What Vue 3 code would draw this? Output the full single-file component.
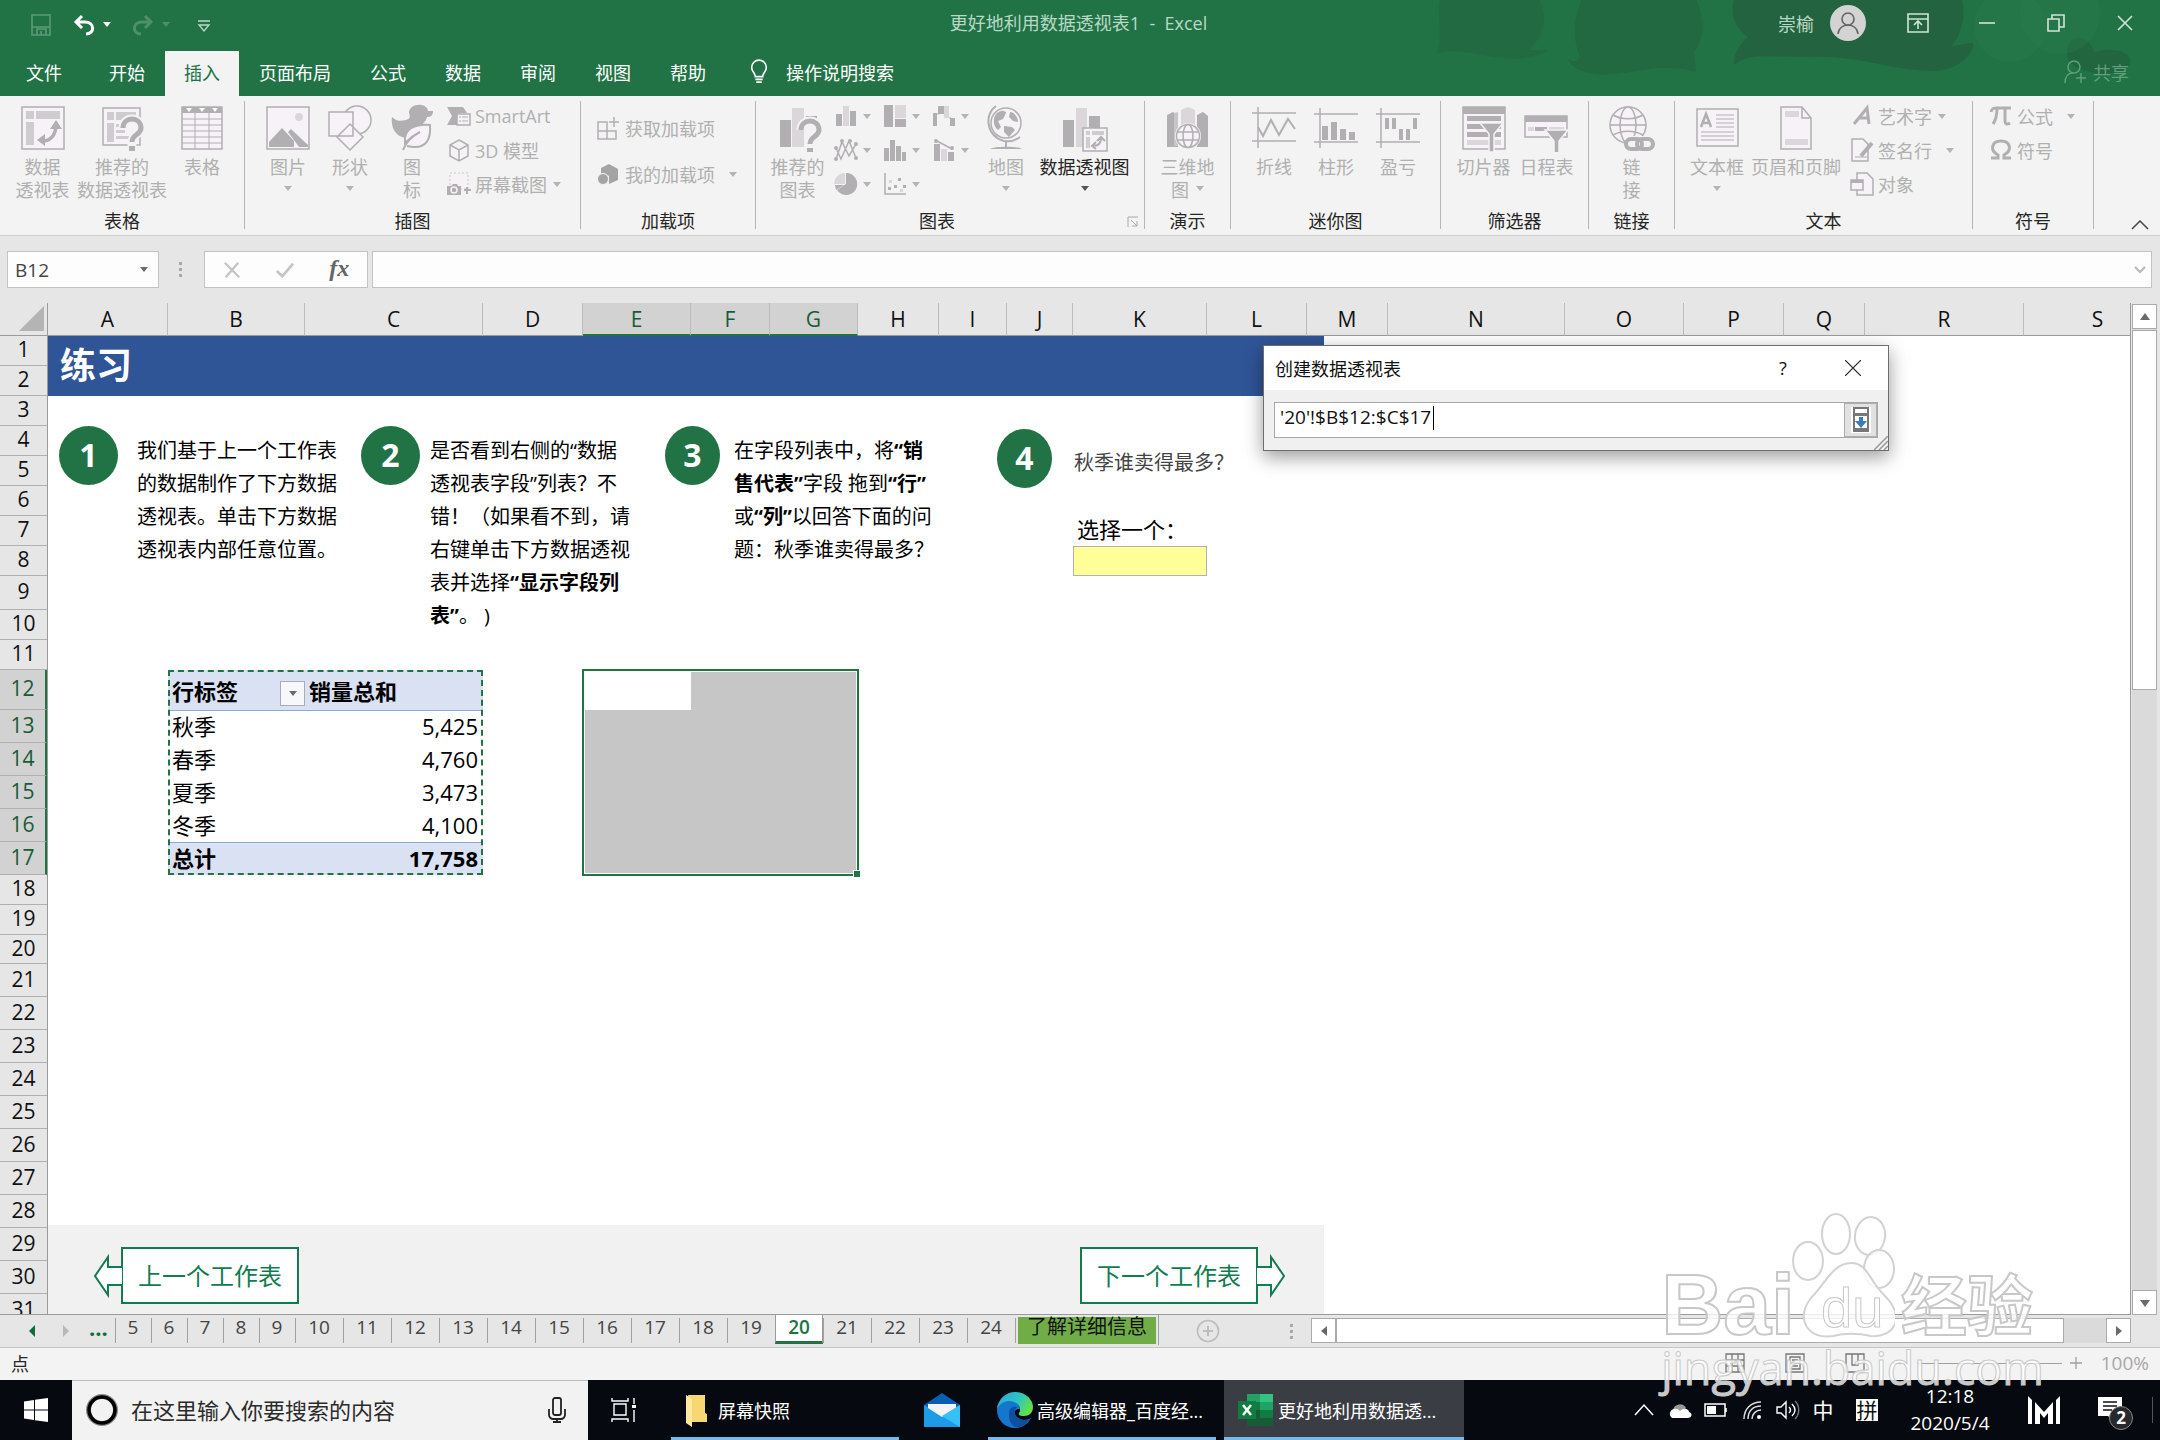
<template>
  <div class="app">
    <header class="titlebar">
      <svg class="titlebar-art" viewBox="0 0 760 96" aria-hidden="true">
        <path fill="#23663f" opacity=".6" d="M40 0h100c8 18 4 38-12 50l20 0c-14 10-40 10-62 6-24-6-40-6-50-2 8-14 0-36 4-54z"/>
        <path fill="#23643f" opacity=".75" d="M182 0h114c10 20 8 40-2 52l2 20c-40-12-70 6-102 2-14-2-24-8-26-15 6 4 10 2 12-2-8-20-6-40 2-57z"/>
        <path fill="#23633f" d="M334 0h228c4 16 0 32-10 46l20-3c6 3-8 26-36 28-50 0-70-16-130-14-36 0-58-4-72 8 0-10 4-20 14-28-14-10-18-24-14-37z"/>
        <path fill="#23633f" opacity=".8" d="M668 60c-6-30 22-26 26-8 30-8 46 8 30 18-20 8-46 2-56-10z"/>
        <circle cx="610" cy="26" r="36" fill="#2a7c4e" opacity=".35"/>
        <circle cx="660" cy="14" r="40" fill="#2a7c4e" opacity=".35"/>
      </svg>
      <div class="quick-access">
        <button class="qa-btn" aria-label="保存"><svg viewBox="0 0 24 24"><g fill="none" stroke="#5d9a78" stroke-width="1.600"><path d="M3 2h18v20H3z"/><path d="M8 22v-6h9v6M3 14h18M12 18v4"/></g></svg></button>
        <button class="qa-btn" aria-label="撤消"><svg viewBox="0 0 24 24"><path d="M4 9h9c10 0 10 12 1 12M10 3L4 9l6 6" fill="none" stroke="#fff" stroke-width="3"/></svg></button>
        <span class="caret caret--light"></span>
        <button class="qa-btn" aria-label="恢复"><svg viewBox="0 0 24 24"><path d="M20 9h-9c-10 0-10 12-1 12M14 3l6 6-6 6" fill="none" stroke="#4d9069" stroke-width="3"/></svg></button>
        <span class="caret caret--dim"></span>
        <button class="qa-btn" aria-label="自定义"><svg viewBox="0 0 24 24"><path d="M8 8h12M9 12h10l-5 6z" fill="none" stroke="#bcdac8" stroke-width="1.300"/></svg></button>
      </div>
      <div class="doc-title">更好地利用数据透视表1&nbsp; -&nbsp; Excel</div>
      <div class="window-area">
        <span class="user-name">崇榆</span>
        <span class="avatar"><svg viewBox="0 0 36 36"><g fill="none" stroke="#666" stroke-width="1.600"><circle cx="18" cy="14" r="6"/><path d="M8 29c1-12 19-12 20 0"/></g></svg></span>
        <button v-for="w in windowButtons" :key="w.label" class="win-btn" :aria-label="w.label">
          <svg viewBox="0 0 24 24" v-html="w.art"></svg>
        </button>
      </div>
    </header>

    <nav class="tabs">
      <button
        v-for="tab in tabs"
        :key="tab"
        class="tab"
        :class="{ 'tab--active': tab === '插入', 'tab--file': tab === '文件' }"
      >{{ tab }}</button>
      <button class="tell-me">
        <svg viewBox="0 0 24 28"><g fill="none" stroke="#fff" stroke-width="1.800"><path d="M8 19c0-4-4-5-4-10a8 8 0 0 1 16 0c0 5-4 6-4 10zM8 22h8M9 25h6"/></g></svg>
        操作说明搜索
      </button>
      <button class="share">
        <svg viewBox="0 0 24 24"><g fill="none" stroke="#5f9f7c" stroke-width="1.500"><circle cx="11" cy="7" r="6"/><path d="M2 23c0-6 3-10 8-10M18 13v10M13 18h10"/></g></svg>
        共享
      </button>
    </nav>

    <section class="ribbon">
      <div v-for="g in groups" :key="g.name" class="group" :class="'group--' + g.key">
        <div class="group-body">
          <button
            v-for="b in g.big"
            :key="b.icon"
            class="big-btn"
            :class="{ 'big-btn--on': b.on }"
            :style="{ width: b.w + 'px' }"
          >
            <svg viewBox="0 0 48 48" v-html="icons[b.icon]"></svg>
            <span v-for="(line, i) in b.lines" :key="i" class="big-line">
              {{ line }}<i v-if="b.inlineArrow && i === b.lines.length - 1" class="caret"></i>
            </span>
            <span v-if="b.arrow" class="big-line"><i class="caret"></i></span>
          </button>
          <div v-if="g.small" class="small-list">
            <button v-for="s in g.small" :key="s.icon" class="small-btn">
              <svg viewBox="0 0 24 24" v-html="icons[s.icon]"></svg>
              <span v-if="s.text">{{ s.text }}</span>
              <i v-if="s.arrow" class="caret" :class="{ 'caret--far': s.far }"></i>
            </button>
          </div>
          <button
            v-for="b in g.after"
            :key="b.icon"
            class="big-btn"
            :class="{ 'big-btn--on': b.on }"
            :style="{ width: b.w + 'px' }"
          >
            <svg viewBox="0 0 48 48" v-html="icons[b.icon]"></svg>
            <span class="big-line">{{ b.lines[0] }}</span>
            <span class="big-line"><i class="caret"></i></span>
          </button>
        </div>
        <div class="group-name">{{ g.name }}</div>
        <svg v-if="g.key === 'chart'" class="launcher" viewBox="0 0 12 12"><path d="M1 11V1h10M4 4l6 6M10 5v5H5" fill="none" stroke="#a8a8a8"/></svg>
      </div>
      <button class="collapse" aria-label="折叠功能区"><svg viewBox="0 0 18 10"><path d="M1 9l8-8 8 8" fill="none" stroke="#444" stroke-width="1.500"/></svg></button>
    </section>

    <section class="formula-row">
      <label class="name-box">
        <input value="B12" aria-label="名称框">
        <i class="caret caret--dark"></i>
      </label>
      <span class="dots"></span>
      <div class="formula-tools">
        <button aria-label="取消"><svg viewBox="0 0 20 20"><path d="M2 2l16 16M17 2L3 18" stroke="#c4c4c4" stroke-width="2.500" fill="none"/></svg></button>
        <button aria-label="输入"><svg viewBox="0 0 20 20"><path d="M1 11l6 6L19 3" stroke="#c4c4c4" stroke-width="3" fill="none"/></svg></button>
        <button aria-label="插入函数" class="fx">fx</button>
      </div>
      <div class="formula-box">
        <input value="" aria-label="编辑栏">
        <svg viewBox="0 0 12 12"><path d="M1 3l5 5 5-5" fill="none" stroke="#b8b8b8" stroke-width="2"/></svg>
      </div>
    </section>

    <main class="workbook">
      <div class="grid-area">
        <div class="col-heads">
          <div class="corner"><svg viewBox="0 0 26 26"><path d="M26 0v26H0z" fill="#b4b4b4"/></svg></div>
          <div
            v-for="c in columns"
            :key="c.id"
            class="col-head"
            :class="{ 'col-head--sel': 'EFG'.includes(c.id) }"
            :style="{ width: c.w + 'px' }"
          >{{ c.id }}</div>
        </div>
        <div class="grid-body">
          <div class="row-heads">
            <div
              v-for="(h, i) in rows"
              :key="i"
              class="row-head"
              :class="{ 'row-head--sel': i > 10 && i < 17 }"
              :style="{ height: h + 'px' }"
            >{{ i + 1 }}</div>
          </div>
          <div class="sheet" :style="sheetStyle">
            <h1 class="banner">练习</h1>

            <div class="steps">
              <span class="step-no">1</span>
              <p>我们基于上一个工作表<br>的数据制作了下方数据<br>透视表。单击下方数据<br>透视表内部任意位置。</p>
              <span class="step-no">2</span>
              <p>是否看到右侧的“数据<br>透视表字段”列表？不<br>错！（如果看不到，请<br>右键单击下方数据透视<br>表并选择<b>“显示字段列<br>表”</b>。 )</p>
              <span class="step-no step-no--narrow">3</span>
              <p>在字段列表中，将<b>“销<br>售代表”</b>字段 拖到<b>“行”</b><br>或<b>“列”</b>以回答下面的问<br>题：秋季谁卖得最多？</p>
              <span class="step-no step-no--narrow step-no--low">4</span>
              <p class="question">秋季谁卖得最多？</p>
            </div>

            <label class="pick-label" for="answer">选择一个：</label>
            <input id="answer" class="pick-cell">

            <table class="pivot">
              <thead>
                <tr>
                  <th><div class="pivot-head">行标签<button aria-label="筛选"><i class="caret caret--dark"></i></button></div></th>
                  <th>销量总和</th>
                </tr>
              </thead>
              <tbody>
                <tr v-for="r in pivot" :key="r[0]"><td>{{ r[0] }}</td><td class="num">{{ r[1] }}</td></tr>
              </tbody>
              <tfoot>
                <tr><td>总计</td><td class="num">17,758</td></tr>
              </tfoot>
            </table>

            <div class="selection"><div class="selection-active"></div><i class="fill-handle"></i></div>

            <div class="sheet-nav">
              <a href="#" class="nav-link">
                <svg viewBox="0 0 30 58"><path d="M29 20H15V10L2 29l13 19V38h14" fill="#fff" stroke="#107c4f" stroke-width="2"/></svg>
                <span class="nav-text nav-text--prev">上一个工作表</span>
              </a>
              <a href="#" class="nav-link">
                <span class="nav-text nav-text--next">下一个工作表</span>
                <svg viewBox="0 0 30 58"><path d="M1 20h14V10l13 19-13 19V38H1" fill="#fff" stroke="#107c4f" stroke-width="2"/></svg>
              </a>
            </div>
          </div>
        </div>
      </div>
      <div class="vscroll">
        <button aria-label="向上滚动"><svg viewBox="0 0 12 12"><path d="M1 9l5-7 5 7z" fill="#6a6a6a"/></svg></button>
        <div class="vtrack"><div class="vthumb"></div></div>
        <button aria-label="向下滚动"><svg viewBox="0 0 12 12"><path d="M1 3l5 7 5-7z" fill="#6a6a6a"/></svg></button>
      </div>

      <div class="dialog" role="dialog" aria-label="创建数据透视表">
        <div class="dialog-title">
          <span>创建数据透视表</span>
          <button aria-label="帮助">?</button>
          <button aria-label="关闭"><svg viewBox="0 0 16 16"><path d="M0 0l16 16M16 0L0 16" stroke="#222" fill="none" stroke-width="1.200"/></svg></button>
        </div>
        <div class="dialog-body">
          <div class="range-box">
            <input value="'20'!$B$12:$C$17" aria-label="表/区域">
            <i class="text-cursor"></i>
            <button aria-label="展开对话框">
              <svg viewBox="0 0 20 26"><path fill="#fff" d="M0 0h20v26H0z"/><path d="M3 1h14v23H3z" fill="#fff" stroke="#777" stroke-width="2"/><path fill="#777" d="M2 6h16v3H2zM2 21h16v4H2z"/><path fill="#3a7bc0" d="M8 10h4v4h4l-6 7-6-7h4z"/></svg>
            </button>
          </div>
        </div>
        <svg class="grip" viewBox="0 0 14 14"><path d="M0 14L14 0M5 14l9-9M10 14l4-4" stroke="#999" stroke-width="1.500"/></svg>
      </div>
    </main>

    <section class="sheet-bar">
      <div class="sheet-tabs">
        <div class="sheet-arrows"><i class="tri tri--on"></i><i class="tri"></i><span>...</span></div>
        <button
          v-for="n in sheets"
          :key="n"
          class="sheet-tab"
          :class="{ 'sheet-tab--wide': n > 9, 'sheet-tab--active': n === 20 }"
        >{{ n }}</button>
        <button class="sheet-tab sheet-tab--info"><span>了解详细信息</span></button>
        <button class="add-sheet" aria-label="新工作表"><svg viewBox="0 0 24 24"><g fill="none" stroke="#bdbdbd" stroke-width="1.600"><circle cx="12" cy="12" r="10.500"/><path d="M12 7v10M7 12h10" stroke-width="2"/></g></svg></button>
        <span class="dots"></span>
      </div>
      <div class="hscroll">
        <button aria-label="向左滚动"><svg viewBox="0 0 12 12"><path d="M9 1L3 6l6 5z" fill="#6a6a6a"/></svg></button>
        <div class="htrack"><div class="hthumb"></div></div>
        <button aria-label="向右滚动"><svg viewBox="0 0 12 12"><path d="M3 1l6 5-6 5z" fill="#6a6a6a"/></svg></button>
      </div>
    </section>

    <footer class="status">
      <span>点</span>
      <div class="status-right">
        <svg viewBox="0 0 20 20"><path d="M1 1h18v18H1zM1 7h18M1 13h18M7 1v18M13 1v18" fill="none" stroke="#777" stroke-width="1.300"/></svg>
        <svg viewBox="0 0 20 20"><path d="M1 1h18v18H1zM5 4h10v12H5zM7 7h6M7 10h6M7 13h6" fill="none" stroke="#777" stroke-width="1.300"/></svg>
        <svg viewBox="0 0 20 20"><path d="M1 1h18v18H1zM7 1v11h6V1" fill="none" stroke="#777" stroke-width="1.300"/></svg>
        <i class="zoom-minus"></i>
        <i class="zoom-line"></i>
        <svg class="zoom-plus" viewBox="0 0 12 12"><path d="M6 0v12M0 6h12" stroke="#a0a0a0" stroke-width="1.300"/></svg>
        <span class="zoom-value">100%</span>
      </div>
    </footer>

    <div class="taskbar">
      <button class="start" aria-label="开始"><svg viewBox="0 0 24 24"><path fill="#fff" d="M0 3.400l10-1.500v9.600H0zM11 1.800L24 0v11.500H11zM0 12.500h10v9.600L0 20.600zM11 12.500h13V24l-13-1.800z"/></svg></button>
      <label class="search">
        <svg viewBox="0 0 34 34"><circle cx="17" cy="17" r="13.500" fill="none" stroke="#888" stroke-width="5"/><circle cx="17" cy="17" r="13" fill="none" stroke="#000" stroke-width="3.500"/></svg>
        <input placeholder="在这里输入你要搜索的内容" aria-label="搜索">
        <svg class="mic" viewBox="0 0 18 26"><g fill="none" stroke="#222" stroke-width="1.800"><rect x="5" y="1" width="8" height="17" rx="2"/><path d="M1 12v6c0 2 2 4 4 4h8c2 0 4-2 4-4v-6M9 22v3M5 25h8"/></g></svg>
      </label>
      <button class="task-view" aria-label="任务视图"><svg viewBox="0 0 26 26"><g fill="none" stroke="#fff" stroke-width="1.400"><path d="M3 7h12v11H3zM1 1v3h16V1M1 25v-3h16v3M23 1v6M23 13v12"/></g><path fill="#fff" d="M21 8h4v3h-4z"/></svg></button>
      <button class="task task--folder">
        <svg viewBox="0 0 24 34"><path fill="#f7d774" d="M4 2h17v18l2 1v8H8z"/><path fill="#ffe9a0" d="M2 2l6 4v28l-6-4z"/></svg>
        屏幕快照
      </button>
      <button class="task task--mail" aria-label="邮件">
        <svg viewBox="0 0 36 36"><path fill="#0a5fb4" d="M18 1l18 12v4H0v-4z"/><path fill="#1e9be8" d="M0 13l18 11 18-11v22H0z"/><path fill="#f4f4f4" d="M4 12h28v4L18 25 4 16z"/><path fill="#35c1f5" d="M18 24l18-11v22z"/></svg>
      </button>
      <button class="task task--edge">
        <svg viewBox="0 0 36 36">
          <defs>
            <linearGradient id="edgeTop" x1="0" y1="0" x2="1" y2="0.500"><stop offset="0" stop-color="#27a5e5"/><stop offset=".6" stop-color="#2fc6c0"/><stop offset="1" stop-color="#62dd4c"/></linearGradient>
          </defs>
          <path fill="#1377d0" d="M0 18C0 8 8 6 15 8c6 2 8 6 8 9-8-1-7 10 4 11 3 0 5-1 7-2-3 6-9 10-16 10C8 36 0 28 0 18z"/>
          <path fill="#0e4f9f" d="M12 22c0-6 4-8 8-7-5 5-1 13 7 13 3 0 5-1 7-2-3 6-9 10-16 9-4-2-6-7-6-13z"/>
          <path fill="url(#edgeTop)" d="M0 17C1 7 9 0 18 0c11 0 18 8 18 15 0 6-4 9-9 9-4 0-6-1-5-3 1-1 1-3 1-5-2-8-17-11-23 1z"/>
        </svg>
        高级编辑器_百度经...
      </button>
      <button class="task task--excel">
        <svg viewBox="0 0 36 34"><path fill="#21a366" d="M9 1h14v8H9z"/><path fill="#33c481" d="M22 1h13v8H22z"/><path fill="#107c41" d="M9 9h13v8H9zM22 17h13v8H22z"/><path fill="#21a366" d="M22 9h13v8H22z"/><path fill="#185c37" d="M9 17h13v8h13v8H9z"/><path fill="#107c41" d="M0 8h18v18H0z"/><path d="M5 12l8 10M13 12L5 22" stroke="#fff" stroke-width="2.500"/></svg>
        更好地利用数据透...
      </button>
      <div class="tray">
        <svg viewBox="0 0 24 24"><path d="M3 17l9-10 9 10" fill="none" stroke="#fff" stroke-width="1.500"/></svg>
        <svg viewBox="0 0 24 24"><path fill="#999" d="M5 12a7 7 0 0 1 13-2l-6 6z"/><path fill="#fff" d="M4 20a5 5 0 0 1 2-9c3-1 5 1 6 2 4-4 9-2 9 1 4 1 3 6-1 6z"/></svg>
        <svg viewBox="0 0 24 24"><path d="M1 6h20v12H1zM22 10v4" fill="none" stroke="#fff" stroke-width="1.500"/><path fill="#fff" d="M3 8h9v8H3z"/></svg>
        <svg viewBox="0 0 24 24"><g fill="none" stroke="#ddd" stroke-width="1.500"><path d="M4 21C4 11 11 4 21 4M8 21C8 13 13 8 21 8M12 21c0-5 4-9 9-9"/></g><circle cx="19" cy="19" r="2" fill="#fff"/></svg>
        <svg viewBox="0 0 24 24"><g fill="none" stroke="#fff" stroke-width="1.400"><path d="M1 9h4l5-5v16l-5-5H1zM13 9c2 2 2 4 0 6M16 6c4 4 4 8 0 12"/><path stroke="#777" d="M19 3c5 5 5 13 0 18"/></g></svg>
        <span class="ime">中</span>
        <span class="ime ime--box">拼</span>
        <div class="clock"><span>12:18</span><span>2020/5/4</span></div>
        <svg class="brand" viewBox="0 0 32 28"><path fill="#fff" d="M0 0l4 4v24H0zM7 6l9 10 9-10v22h-5V17l-4 5-4-5v11H7zM32 0v28h-4V4z"/></svg>
        <div class="notify">
          <svg viewBox="0 0 24 26"><path fill="#fff" d="M0 0h24v19h-8v6l-6-6H0z"/><path d="M5 5h14M5 9h14M5 13h9" stroke="#111" stroke-width="1.500"/></svg>
          <span>2</span>
        </div>
      </div>
    </div>

    <div class="watermark" aria-hidden="true">
      <div class="wm-top">
        <span class="wm-bai">Bai</span>
        <span class="wm-paw">
          <svg viewBox="0 0 104 128"><g fill="#fff" fill-opacity=".8" stroke="#d2d2d2" stroke-width="2"><ellipse cx="17" cy="49" rx="15" ry="19"/><ellipse cx="45" cy="22" rx="14" ry="20"/><ellipse cx="79" cy="24" rx="15" ry="19" transform="rotate(8 79 24)"/><ellipse cx="88" cy="57" rx="15" ry="19"/><path d="M60 51c17 0 18 18 34 33 22 22 8 42-14 40-14-3-26-3-38 0-26 4-38-18-22-38 14-14 22-35 40-35z"/></g></svg>
          <span class="wm-du">du</span>
        </span>
        <span class="wm-jy">经验</span>
      </div>
      <div class="wm-url">jingyan.baidu.com</div>
    </div>
  </div>
</template>

<script setup>
const tabs = ['文件', '开始', '插入', '页面布局', '公式', '数据', '审阅', '视图', '帮助']

const columns = [
  ['A', 120], ['B', 137], ['C', 178], ['D', 100], ['E', 108], ['F', 79], ['G', 88],
  ['H', 81], ['I', 68], ['J', 66], ['K', 134], ['L', 100], ['M', 81], ['N', 177],
  ['O', 119], ['P', 100], ['Q', 81], ['R', 159], ['S', 148]
].map(([id, w]) => ({ id, w }))

const rows = [
  30, 30, 30, 30, 30, 30, 30, 30, 34, 30, 30, 40, 33, 33, 33, 33, 33,
  30, 30, 29, 33, 33, 33, 33, 33, 33, 33, 33, 33, 33, 33
]

const sheetStyle = {
  gridTemplateColumns: columns.map(c => c.w + 'px').join(' '),
  gridTemplateRows: rows.map(h => h + 'px').join(' ')
}

const pivot = [['秋季', '5,425'], ['春季', '4,760'], ['夏季', '3,473'], ['冬季', '4,100']]

const sheets = Array.from({ length: 20 }, (_, i) => i + 5)

const windowButtons = [
  { label: '功能区显示选项', art: '<path d="M2 3h20v18H2zM2 8h20M12 18v-7M8 14l4-4 4 4" fill="none" stroke="#cfe5d8" stroke-width="1.6"/>' },
  { label: '最小化', art: '<path d="M4 12h16" stroke="#cfe5d8" stroke-width="1.6"/>' },
  { label: '向下还原', art: '<path d="M4 8h11v12H4zM8 8V4h12v12h-5" fill="none" stroke="#cfe5d8" stroke-width="1.6"/>' },
  { label: '关闭', art: '<path d="M5 5l14 14M19 5L5 19" stroke="#cfe5d8" stroke-width="1.6"/>' }
]

const groups = [
  { key: 'table', name: '表格', big: [
    { icon: 'pivot', w: 69, lines: ['数据', '透视表'] },
    { icon: 'recPivot', w: 90, lines: ['推荐的', '数据透视表'] },
    { icon: 'table', w: 70, lines: ['表格'] }
  ] },
  { key: 'art', name: '插图', big: [
    { icon: 'picture', w: 62, lines: ['图片'], arrow: true },
    { icon: 'shapes', w: 62, lines: ['形状'], arrow: true },
    { icon: 'duck', w: 62, lines: ['图', '标'] }
  ], small: [
    { icon: 'smartart', text: 'SmartArt' },
    { icon: 'cube', text: '3D 模型' },
    { icon: 'screenshot', text: '屏幕截图', arrow: true }
  ] },
  { key: 'addin', name: '加载项', small: [
    { icon: 'store', text: '获取加载项' },
    { icon: 'addins', text: '我的加载项', arrow: true, far: true }
  ] },
  { key: 'chart', name: '图表', big: [
    { icon: 'recChart', w: 73, lines: ['推荐的', '图表'] }
  ], small: ['column', 'treemap', 'waterfall', 'line', 'histogram', 'combo', 'pie', 'scatter'].map(icon => ({ icon, arrow: true })),
  after: [
    { icon: 'globe', w: 50, lines: ['地图'] },
    { icon: 'pivotChart', w: 107, lines: ['数据透视图'], on: true }
  ] },
  { key: 'tour', name: '演示', big: [
    { icon: 'map3d', w: 85, lines: ['三维地', '图'], inlineArrow: true }
  ] },
  { key: 'spark', name: '迷你图', big: [
    { icon: 'sparkLine', w: 62, lines: ['折线'] },
    { icon: 'sparkCol', w: 62, lines: ['柱形'] },
    { icon: 'sparkWin', w: 62, lines: ['盈亏'] }
  ] },
  { key: 'filter', name: '筛选器', big: [
    { icon: 'slicer', w: 63, lines: ['切片器'] },
    { icon: 'timeline', w: 63, lines: ['日程表'] }
  ] },
  { key: 'link', name: '链接', big: [
    { icon: 'link', w: 85, lines: ['链', '接'] }
  ] },
  { key: 'text', name: '文本', big: [
    { icon: 'textbox', w: 66, lines: ['文本框'], arrow: true },
    { icon: 'headerFooter', w: 92, lines: ['页眉和页脚'] }
  ], small: [
    { icon: 'wordart', text: '艺术字', arrow: true },
    { icon: 'signature', text: '签名行', arrow: true, far: true },
    { icon: 'object', text: '对象' }
  ] },
  { key: 'symbol', name: '符号', small: [
    { icon: 'pi', text: '公式', arrow: true, far: true },
    { icon: 'omega', text: '符号' }
  ] }
]

const D = '#b1afb1'
const L = '#dad6da'
const F = '#f6f2f7'
const question = (x, y) => {
  const d = `M${x} ${y + 9}c0-12 18-12 18 0c0 7-9 6-9 14`
  return `<path d="${d}v10" fill="none" stroke="#f3f3f3" stroke-width="9"/><path d="${d}" fill="none" stroke="${D}" stroke-width="5"/><path fill="${D}" d="M${x + 6} ${y + 27}h6v5h-6z"/>`
}
const funnel = (x, y) => `<path d="M${x} ${y}h23l-9 11v18h-5V${y + 11}z" fill="${D}" stroke="#f3f3f3" stroke-width="1.5"/>`

const icons = {
  pivot: `<path d="M3 3h42v42H3z" fill="${F}" stroke="${D}" stroke-width="1.5"/><path fill="#cfccd0" d="M7 7h8v8H7zM17 7h24v8H17zM7 18h8v23H7z"/><path d="M22 37c9 1 15-6 15-16" fill="none" stroke="${D}" stroke-width="3.500"/><path fill="${D}" d="M37 16l6 9H31zM18 36l8-6v12z"/>`,
  recPivot: `<path d="M5 4h37v37H5z" fill="${F}" stroke="${D}" stroke-width="1.500"/><path fill="#cfccd0" d="M9 8h7v8H9zM18 8h20v8H18zM9 19h7v19H9zM18 20h9v3h-9zM18 26h9v3h-9zM18 32h14v3H18z"/>${question(25, 15)}`,
  table: `<path d="M4 3h40v42H4z" fill="${F}" stroke="${D}" stroke-width="1.500"/><path fill="${D}" d="M4 3h40v6H4z"/><path fill="#fff" d="M8 4h6l-3 4zM21 4h6l-3 4zM34 4h6l-3 4z"/><path d="M4 15h40M4 21h40M4 27h40M4 33h40M4 39h40M17 9v36M31 9v36" stroke="${D}" fill="none"/>`,
  picture: `<path d="M3 3h42v42H3z" fill="${F}" stroke="${D}" stroke-width="1.500"/><circle cx="35" cy="13" r="4" fill="${L}"/><path fill="${D}" d="M5 43V38L18 24l12 13v6zM24 28l3-3 17 16v2h-9z"/>`,
  shapes: `<circle cx="31" cy="16" r="14" fill="${F}" stroke="${D}" stroke-width="1.500"/><path d="M3 8h24v24H3zM24 20l13 13-13 13-13-13z" fill="${F}" stroke="${D}" stroke-width="1.500"/>`,
  duck: `<path fill="${D}" d="M21 9c0-10 18-11 19-2h5c0 5-3 6-6 6-1 4-3 5-4 7-8 1-13 7-13 14-10 1-20-6-18-21 5 5 9 4 14 3 3-1 5-2 3-7z"/><path d="M15 46c3-8 10-14 17-18-8 4-14 10-15 11-2-15 11-19 25-18 1 12-2 26-23 21" fill="${F}" stroke="${D}" stroke-width="2"/>`,
  recChart: `<path fill="${D}" d="M6 16h11v27H6zM32 12h11v8H32z"/><path fill="${L}" d="M18 4h12v39H18z"/>${question(27, 17)}`,
  globe: `<circle cx="24" cy="19" r="15" fill="${F}" stroke="${D}" stroke-width="1.500"/><path fill="${D}" d="M14 10c5-5 10-3 10-1l-3 6-5 2 3 6-3 3c-4-3-6-10-2-16zM28 8c4 0 8 5 8 10l-5-1-4-4zM22 22l8 1 3 3-6 7-5-5z"/><path d="M14 2c-12 8-10 30 8 35 6 1 11 0 16-4M24 37v6" fill="none" stroke="${D}" stroke-width="2"/><path fill="${D}" d="M8 45c4-3 28-3 32 0z"/>`,
  pivotChart: `<path fill="${D}" d="M2 16h11v27H2zM28 12h11v12H28z"/><path fill="${L}" d="M15 4h11v39H15z"/><path d="M22 24h24v23H22z" fill="${F}" stroke="${D}" stroke-width="1.500"/><path fill="#cfccd0" d="M25 27h4v4h-4zM31 27h12v4H31zM25 33h4v11h-4z"/><path d="M32 42c5 0 8-3 8-8M36 37l4-4 4 4M35 38l-4 4 4 3" fill="none" stroke="${D}" stroke-width="2"/>`,
  map3d: `<path fill="${D}" d="M3 11l6-3 5 4v31H3zM33 11l6-3 5 4v31H33z"/><path fill="#c8c5c9" d="M10 9l4-1v34h-4z"/><path fill="${L}" d="M17 6l7-3 7 3v36H17z"/><circle cx="24" cy="32" r="13" fill="#f3f3f3"/><g fill="${F}" stroke="${D}" stroke-width="1.500"><circle cx="24" cy="32" r="11.500"/><ellipse cx="24" cy="32" rx="5" ry="11.500"/><path d="M13 28h22M13 36h22"/></g>`,
  sparkLine: `<path d="M2 9h44M2 37h44M8 3v41" stroke="${D}" stroke-width="1.500"/><path d="M8 23l5 9 8-16 8 15 9-16 7 10" fill="none" stroke="${D}" stroke-width="2"/>`,
  sparkCol: `<path d="M2 10h44M2 38h44M8 4v40" stroke="${D}" stroke-width="1.500"/><path fill="${D}" d="M10 22h6v14h-6zM19 18h6v18h-6zM28 25h6v11h-6zM37 28h6v8h-6z"/>`,
  sparkWin: `<path d="M2 10h44M2 38h44M7 4v40" stroke="${D}" stroke-width="1.500"/><path fill="${D}" d="M11 14h4v11h-4zM18 14h4v11h-4zM39 14h4v11h-4zM25 25h4v11h-4zM32 25h4v11h-4z"/>`,
  slicer: `<path d="M3 3h42v42H3z" fill="${F}" stroke="${D}" stroke-width="1.500"/><path fill="${D}" d="M3 3h42v7H3zM7 12h34v5H7zM7 20h34v5H7zM7 28h34v5H7z"/><path fill="${L}" d="M7 36h34v5H7z"/>${funnel(20, 19)}`,
  timeline: `<path d="M2 12h42v21H2z" fill="${F}" stroke="${D}" stroke-width="1.500"/><path fill="${D}" d="M2 12h42v6H2zM12 23h12v4H12z"/><path fill="${L}" d="M5 23h6v4H5zM26 23h15v4H26z"/>${funnel(22, 26)}`,
  link: `<g fill="${F}" stroke="${D}" stroke-width="1.500"><circle cx="20" cy="21" r="18"/><ellipse cx="20" cy="21" rx="8" ry="18"/><path d="M2 21h36M5 11c9 5 21 5 30 0M5 31c9-5 21-5 30 0" fill="none"/></g><g fill="none"><path d="M24 36h17v8H24z" stroke="#f3f3f3" stroke-width="8"/><rect x="18" y="35" width="16" height="10" rx="5" stroke="${D}" stroke-width="4"/><rect x="29" y="35" width="16" height="10" rx="5" stroke="${D}" stroke-width="4"/></g>`,
  textbox: `<path d="M4 5h41v37H4z" fill="${F}" stroke="${D}" stroke-width="1.500"/><path d="M8 23l5-13 5 13M10 19h6" fill="none" stroke="${D}" stroke-width="2.500"/><path d="M23 11h18M23 15h18M23 19h18M23 23h18M8 28h33M8 32h33M8 36h33" stroke="${D}"/>`,
  headerFooter: `<path d="M9 3h21l9 11v31H9z" fill="${F}" stroke="${D}" stroke-width="1.500"/><path d="M30 3v11h9" fill="none" stroke="${D}" stroke-width="1.500"/><path fill="${L}" d="M13 7h14v6H13zM13 35h23v6H13z"/>`,
  smartart: `<path fill="${D}" d="M0 3h16l4 6h-9v12H0l5-9z"/><path d="M10 10h13v11H10z" fill="${F}" stroke="${D}" stroke-width="1.500"/><path d="M12 13h2M15 13h6M12 17h2M15 17h6" stroke="${D}"/>`,
  cube: `<path d="M12 2l9 5v11l-9 5-9-5V7zM3 7l9 5 9-5M12 12v11" fill="${F}" stroke="${D}" stroke-width="1.500"/>`,
  screenshot: `<path d="M3 1h18v16H3z" fill="${F}" stroke="${L}" stroke-width="1.500" stroke-dasharray="2 2"/><path fill="${D}" d="M0 14h4l2-2h4l1 2h3v9H0z"/><circle cx="7" cy="18" r="3" fill="${D}" stroke="#f3f3f3" stroke-width="1.500"/><path d="M17 18h7M20 15v7" stroke="${D}" stroke-width="2"/>`,
  store: `<path d="M1 6h9v17H1zM1 15h18v8H1zM10 15v8M17 1v10M12 6h10" fill="none" stroke="${D}" stroke-width="1.500"/>`,
  addins: `<path fill="#a5a3a5" d="M4 6l8-4 9 5v11l-9 4v-8l-6-3-2 1z"/><circle cx="6" cy="17" r="5.500" fill="#a5a3a5" stroke="#f3f3f3"/>`,
  column: `<path fill="${D}" d="M2 10h6v12H2zM16 7h6v15h-6z"/><path fill="${L}" d="M9 2h6v20H9z"/>`,
  treemap: `<path fill="${D}" d="M1 1h9v22H1zM12 15h11v8H12z"/><path fill="${L}" d="M12 1h11v13H12z"/>`,
  waterfall: `<path fill="${D}" d="M6 2h6v8H6zM1 9h4v13H1zM18 14h5v8h-5z"/><path fill="${L}" d="M12 2h5v12h-5z"/><path d="M5 10h2M17 14h2" stroke="${D}"/>`,
  line: `<path d="M2 10l5 11 8-18 7 17M2 21L8 4l7 14 7-12" fill="none" stroke="${D}" stroke-width="1.500"/><g fill="${D}"><circle cx="2" cy="10" r="2"/><circle cx="2" cy="21" r="2"/><circle cx="8" cy="3" r="2"/><circle cx="16" cy="3" r="2"/><circle cx="22" cy="6" r="2"/><circle cx="22" cy="20" r="2"/></g>`,
  histogram: `<path fill="${D}" d="M1 10h5v13H1zM7 2h5v21H7zM13 8h5v15h-5zM19 14h4v9h-4z"/>`,
  combo: `<path fill="${D}" d="M2 6h6v17H2zM16 14h6v9h-6z"/><path fill="${L}" d="M9 11h6v12H9z"/><path d="M3 2l17 9" stroke="${D}" stroke-width="1.500"/><circle cx="4" cy="3" r="2" fill="${D}"/><circle cx="20" cy="10" r="2" fill="${D}"/>`,
  pie: `<path fill="${D}" d="M12 1a11 11 0 1 1-9 17l9-6z"/><path fill="${L}" d="M11 1v11H0A11 11 0 0 1 11 1z"/><path fill="${D}" d="M1 13h9l-8 5z"/>`,
  scatter: `<path d="M2 1v21h21" fill="none" stroke="${D}" stroke-width="1.500"/><path fill="${D}" d="M15 6h3v3h-3zM11 13h3v3h-3zM5 15h3v3H5zM20 13h3v3h-3z"/><path fill="${L}" d="M6 8h3v3H6zM17 17h3v3h-3z"/>`,
  wordart: `<path d="M4 20L17 4l2 16M9 14h9" fill="none" stroke="${D}" stroke-width="3"/>`,
  signature: `<path d="M2 1h11l5 5v17H2z" fill="${F}" stroke="${D}" stroke-width="1.500"/><path d="M22 5L11 18" stroke="${D}" stroke-width="4"/><path d="M5 19h12" stroke="${D}"/>`,
  object: `<path d="M7 1h10l6 6v16H7z" fill="${F}" stroke="${D}" stroke-width="1.500"/><path d="M1 8h12v10H1z" fill="${F}" stroke="${D}" stroke-width="1.500"/><path fill="${D}" d="M1 8h12v3H1z"/>`,
  pi: `<path d="M2 8c1-4 3-4 6-4h14M8 4c0 8-1 12-4 16M16 4v13c0 3 2 4 5 2" fill="none" stroke="${D}" stroke-width="3"/>`,
  omega: `<path d="M2 20h7v-3C0 12 3 3 12 3s12 9 3 14v3h7" fill="none" stroke="${D}" stroke-width="3"/>`
}
</script>

<style>
body {
  margin: 0;
  overflow: hidden;
}
</style>

<style scoped>
.app {
  display: flex;
  flex-direction: column;
  height: 100vh;
  position: relative;
  overflow: hidden;
  background: #e6e6e6;
  color: #262626;
  font-family: 'Open Sans', 'Noto Sans CJK SC', sans-serif;
  font-size: 18px;
}

.app *,
.app *::before {
  box-sizing: border-box;
}

svg {
  display: block;
  flex-shrink: 0;
}

button,
input {
  font: inherit;
  color: inherit;
  border: 0;
  padding: 0;
  margin: 0;
  background: none;
  border-radius: 0;
  outline: 0;
}

.caret {
  display: inline-block;
  flex-shrink: 0;
  border: 4px solid transparent;
  border-top: 5px solid #b4b4b4;
  border-bottom: 0;
}

.caret--light { border-top-color: #fff; }
.caret--dim   { border-top-color: #4d9069; }
.caret--dark  { border-top-color: #6a6a6a; }
.caret--far   { margin-left: 10px; }

/* title bar */
.titlebar {
  display: flex;
  justify-content: space-between;
  flex: none;
  height: 51px;
  position: relative;
  background: #217346;
  color: #b9d8c6;
}

.titlebar-art {
  position: absolute;
  right: 0;
  top: 0;
  width: 760px;
  height: 96px;
  z-index: 1;
}

.quick-access {
  display: flex;
  align-items: center;
  flex: 1;
  padding: 0 0 2px 29px;
}

.qa-btn {
  width: 24px;
  height: 24px;
  margin-right: 19px;
}

.qa-btn + .caret {
  margin: 0 20px 0 -12px;
}

.doc-title {
  margin-right: 20px;
  line-height: 46px;
}

.window-area {
  display: flex;
  align-items: center;
  justify-content: flex-end;
  flex: 1;
  padding: 0 12px 5px 0;
  z-index: 2;
}

.avatar {
  width: 36px;
  height: 36px;
  margin: 0 17px 0 16px;
  border-radius: 50%;
  background: #d3d3d3;
}

.win-btn {
  display: flex;
  justify-content: center;
  width: 70px;
  margin-right: -1px;
}

.win-btn:last-child {
  margin-right: -12px;
}

.win-btn svg {
  width: 24px;
  height: 24px;
}

/* ribbon tabs */
.tabs {
  display: flex;
  flex: none;
  height: 45px;
  background: #217346;
  color: #fff;
}

.tab {
  padding: 0 19px 4px;
  margin-right: 1px;
}

.tab--file {
  padding: 0 26px 4px;
  margin-right: 2px;
}

.tab--active {
  background: #f3f3f3;
  color: #217346;
}

.tell-me,
.share {
  display: flex;
  align-items: center;
  padding-bottom: 4px;
}

.tell-me {
  margin-left: 22px;
  gap: 16px;
}

.tell-me svg {
  width: 22px;
  height: 26px;
}

.share {
  margin: 0 31px 0 auto;
  gap: 6px;
  color: #5f9f7c;
  position: relative;
  z-index: 2;
}

.share svg {
  width: 24px;
  height: 24px;
}

/* ribbon */
.ribbon {
  display: flex;
  flex: none;
  height: 140px;
  padding-top: 5px;
  background: #f3f3f3;
  border-bottom: 1px solid #cfcfcf;
}

.group {
  display: flex;
  flex-direction: column;
  justify-content: space-between;
  flex: none;
  height: 128px;
  position: relative;
  border-right: 1px solid #b6b6b6;
}

.group--table  { width: 245px; }
.group--art    { width: 336px; }
.group--addin  { width: 175px; }
.group--chart  { width: 389px; }
.group--tour   { width: 86px; }
.group--spark  { width: 210px; }
.group--filter { width: 148px; }
.group--link   { width: 86px; }
.group--text   { width: 298px; }
.group--symbol { width: 121px; }

.group-body {
  display: flex;
  height: 110px;
  color: #b0b0b0;
}

.group--table .group-body  { padding-left: 8px; }
.group--art .group-body    { padding-left: 12px; }
.group--addin .group-body  { padding-left: 16px; }
.group--chart .group-body  { padding-left: 5px; }
.group--spark .group-body  { padding-left: 12px; }
.group--filter .group-body { padding-left: 11px; }
.group--text .group-body   { padding-left: 9px; }
.group--symbol .group-body { padding-left: 16px; }

.group-name {
  line-height: 16px;
  text-align: center;
}

.group--chart .group-name {
  padding-right: 26px;
}

.big-btn {
  display: flex;
  flex-direction: column;
  align-items: center;
  flex: none;
  padding-top: 3px;
}

.big-btn svg {
  width: 48px;
  height: 48px;
  margin-bottom: 2px;
}

.big-line {
  display: flex;
  align-items: center;
  gap: 7px;
  height: 23px;
  white-space: nowrap;
}

.big-btn--on {
  color: #262626;
}

.big-btn--on .caret {
  border-top-color: #555;
}

.small-list {
  display: flex;
  flex-direction: column;
  margin: -2px 0 0 4px;
}

.small-btn {
  display: flex;
  align-items: center;
  gap: 4px;
  height: 34px;
  white-space: nowrap;
}

.small-btn svg {
  width: 24px;
  height: 24px;
}

.small-btn .caret:not(.caret--far) {
  margin-left: 2px;
}

.group--addin .small-list {
  padding-top: 6px;
  margin-left: 0;
}

.group--addin .small-btn {
  height: 46px;
}

.group--chart .small-list {
  display: grid;
  grid-template-columns: repeat(3, 49px);
  grid-auto-rows: 34px;
  margin-left: 0;
}

.group--chart .small-btn .caret {
  margin-left: 1px;
}

.group--text .small-list {
  margin-left: 8px;
}

.group--symbol .small-list {
  margin-left: 0;
}

.launcher {
  position: absolute;
  right: 5px;
  bottom: 1px;
  width: 12px;
  height: 12px;
}

.collapse {
  margin: auto 11px 5px auto;
}

.collapse svg {
  width: 18px;
  height: 10px;
}

/* formula bar */
.formula-row {
  display: flex;
  flex: none;
  height: 67px;
  padding: 15px 8px 15px 7px;
  font-size: 19px;
}

.name-box,
.formula-tools,
.formula-box {
  display: flex;
  align-items: center;
  background: #fdfdfd;
  border: 1px solid #c3c3c3;
}

.name-box {
  width: 152px;
  padding: 0 10px 0 7px;
  color: #444;
}

.name-box input,
.formula-box input {
  flex: 1;
  min-width: 0;
}

.dots {
  width: 3px;
  height: 15px;
  margin: auto 22px auto 20px;
  background: repeating-linear-gradient(#a8a8a8 0 3px, transparent 3px 6px);
}

.formula-tools {
  justify-content: space-around;
  width: 164px;
}

.formula-tools svg {
  width: 18px;
  height: 18px;
}

.fx {
  padding-bottom: 3px;
  font: italic 700 24px 'Liberation Serif', serif;
  color: #666;
}

.formula-box {
  flex: 1;
  margin-left: 4px;
  padding-right: 5px;
}

.formula-box svg {
  width: 12px;
  height: 12px;
}

/* worksheet */
.workbook {
  display: flex;
  flex: 1;
  min-height: 0;
  position: relative;
}

.grid-area {
  display: flex;
  flex-direction: column;
  flex: 1;
  min-width: 0;
  border-right: 1px solid #9b9b9b;
  border-bottom: 1px solid #9b9b9b;
  overflow: hidden;
}

.col-heads {
  display: flex;
  flex: none;
  height: 33px;
  color: #111;
  font-size: 21px;
}

.corner {
  flex: none;
  width: 48px;
  padding: 3px 3px 3px 19px;
  border-right: 1px solid #9b9b9b;
  border-bottom: 1px solid #9b9b9b;
}

.col-head {
  flex: none;
  line-height: 32px;
  text-align: center;
  border-right: 1px solid #bcbcbc;
  border-bottom: 1px solid #9b9b9b;
}

.col-head--sel {
  background: #d2d2d2;
  color: #185c37;
  border-bottom: 2px solid #217346;
}

.grid-body {
  display: flex;
  flex: 1;
  min-height: 0;
}

.row-heads {
  flex: none;
  width: 48px;
  overflow: hidden;
  color: #111;
  font-size: 21px;
  border-right: 1px solid #9b9b9b;
}

.row-head {
  display: flex;
  align-items: center;
  justify-content: center;
  padding-bottom: 3px;
  line-height: 26px;
  border-bottom: 1px solid #b0b0b0;
}

.row-head--sel {
  background: #d2d2d2;
  color: #185c37;
  border-right: 2px solid #217346;
}

.sheet {
  display: grid;
  flex: 1;
  min-width: 0;
  overflow: hidden;
  background: #fff;
  color: #000;
}

.banner {
  grid-area: 1 / 1 / 3 / 14;
  width: 1276px;
  margin: 0;
  padding-left: 12px;
  line-height: 60px;
  font-size: 36px;
  font-weight: 700;
  color: #fff;
  background: #2f5597;
}

.steps {
  grid-area: 4 / 1 / 12 / 15;
  display: grid;
  grid-template-columns: 78px 224px 69px 235px 69px 263px 77px 200px;
  padding-left: 11px;
  font-size: 20px;
}

.steps p {
  margin: 8px 0 0;
  line-height: 33px;
  white-space: nowrap;
}

.steps .question {
  margin-top: 20px;
  color: #444;
}

.step-no {
  width: 59px;
  height: 59px;
  line-height: 58px;
  text-align: center;
  font-size: 32px;
  font-weight: 700;
  color: #fff;
  background: #217346;
  border-radius: 50%;
}

.step-no--narrow {
  width: 55px;
}

.step-no--low {
  margin-top: 3px;
}

.pick-label {
  grid-area: 7 / 11 / 8 / 13;
  padding-left: 4px;
  line-height: 26px;
  font-size: 22px;
}

.pick-cell {
  grid-area: 8 / 11 / 9 / 12;
  min-width: 0;
  background: #ffff99;
  border: 1px solid #b2b2b2;
}

.pivot {
  grid-area: 12 / 2 / 18 / 4;
  height: 205px;
  border-collapse: collapse;
  table-layout: fixed;
  font-size: 22px;
  line-height: 28px;
  outline: 2px dashed #217346;
  outline-offset: -2px;
}

.pivot tr {
  height: 33px;
}

.pivot thead tr {
  height: 40px;
}

.pivot th,
.pivot td {
  padding: 0 5px 1px 4px;
  text-align: left;
}

.pivot th {
  width: 178px;
  padding-top: 4px;
  background: #d9e1f2;
  border-bottom: 1px solid #8ea9db;
}

.pivot th:first-child {
  width: 137px;
  padding-right: 0;
}

.pivot-head {
  display: flex;
  justify-content: space-between;
}

.pivot-head button {
  display: flex;
  align-items: center;
  justify-content: center;
  width: 25px;
  height: 25px;
  margin-top: 4px;
  background: #f7f8fa;
  border: 1px solid #a6adb8;
}

.pivot tfoot td {
  font-weight: 700;
  background: #d9e1f2;
  border-top: 1px solid #8ea9db;
}

.pivot .num {
  text-align: right;
}

.selection {
  grid-area: 12 / 5 / 18 / 8;
  position: relative;
  margin: -1px;
  padding: 0;
  background: #c6c6c6;
  border: 2px solid #217346;
  box-shadow: inset 0 0 0 1px #fff;
}

.selection-active {
  width: 107px;
  height: 39px;
  background: #fff;
}

.fill-handle {
  position: absolute;
  right: -3px;
  bottom: -3px;
  width: 7px;
  height: 7px;
  background: #217346;
  border: solid #fff;
  border-width: 1px 0 0 1px;
}

.sheet-nav {
  grid-area: 28 / 1 / 32 / 14;
  display: flex;
  justify-content: space-between;
  align-items: flex-start;
  width: 1276px;
  margin-top: 30px;
  padding: 22px 38px 0 45px;
  background: #f1f1f1;
}

.nav-link {
  display: flex;
  text-decoration: none;
  color: #107c4f;
  font-size: 24px;
}

.nav-link svg {
  width: 30px;
  height: 58px;
  position: relative;
}

.nav-text {
  width: 178px;
  height: 57px;
  line-height: 53px;
  text-align: center;
  background: #fff;
  border: 2px solid #107c4f;
}

.nav-text--prev { margin-left: -2px; }
.nav-text--next { margin-right: -2px; }

.vscroll {
  display: flex;
  flex-direction: column;
  flex: none;
  width: 29px;
  padding: 1px 3px 0 1px;
}

.vscroll button,
.hscroll button {
  display: flex;
  align-items: center;
  justify-content: center;
  flex: none;
  width: 25px;
  height: 25px;
  background: #fff;
  border: 1px solid #ababab;
}

.vscroll svg,
.hscroll svg {
  width: 12px;
  height: 12px;
}

.vtrack {
  flex: 1;
  padding-top: 1px;
  background: #dadada;
}

.vthumb {
  height: 37.5%;
  background: #fff;
  border: 1px solid #ababab;
}

/* range picker dialog */
.dialog {
  position: absolute;
  left: 1263px;
  top: 42px;
  width: 626px;
  background: #f0f0f0;
  border: 1px solid #6d6d6d;
  box-shadow: 0 6px 18px rgba(0, 0, 0, 0.4);
}

.dialog-title {
  display: flex;
  align-items: center;
  height: 44px;
  padding-left: 11px;
  background: #fff;
  color: #111;
}

.dialog-title span {
  flex: 1;
}

.dialog-title button {
  display: flex;
  justify-content: center;
  width: 70px;
}

.dialog-title svg {
  width: 16px;
  height: 16px;
}

.dialog-body {
  padding: 12px 10px;
}

.range-box {
  display: flex;
  position: relative;
  height: 36px;
  background: #fff;
  border: 1px solid #a8a8a8;
  color: #111;
  font-size: 19px;
}

.range-box input {
  flex: 1;
  min-width: 0;
  padding: 0 0 7px 5px;
}

.range-box button {
  display: flex;
  align-items: center;
  justify-content: center;
  width: 33px;
  background: #e1e1e1;
  border: 1px solid #adadad;
}

.range-box button svg {
  width: 20px;
  height: 26px;
}

.text-cursor {
  position: absolute;
  left: 158px;
  top: 3px;
  width: 1px;
  height: 24px;
  background: #000;
}

.grip {
  position: absolute;
  right: 0;
  bottom: 0;
  width: 14px;
  height: 14px;
}

/* sheet tabs */
.sheet-bar {
  display: flex;
  flex: none;
  height: 32px;
}

.sheet-tabs {
  display: flex;
  flex: none;
  width: 1311px;
  color: #444;
  font-size: 19px;
}

.sheet-arrows {
  display: flex;
  align-items: center;
  width: 115px;
  padding-left: 29px;
}

.sheet-arrows span {
  margin: -8px 0 0 20px;
  font-size: 22px;
  font-weight: 700;
  color: #0f6b39;
}

.tri {
  border: 6px solid transparent;
  border-left: 6px solid #b8b8b8;
  border-right: 0;
  margin-left: 28px;
}

.tri--on {
  border-left: 0;
  border-right: 6px solid #0f6b39;
  margin-left: 0;
}

.sheet-tab {
  width: 36px;
  height: 30px;
  padding-bottom: 7px;
  line-height: 22px;
  background: linear-gradient(#a0a0a0, #a0a0a0) left 3px / 1px 25px no-repeat;
}

.sheet-tab--wide {
  width: 48px;
}

.sheet-tab--active {
  margin-top: -1px;
  background: #fff;
  border: 1px solid #9b9b9b;
  border-top: 0;
  border-bottom: 3px solid #217346;
  padding-bottom: 2px;
  color: #217346;
  font-weight: 600;
}

.sheet-tab--info {
  width: 144px;
  padding: 2px 2px 1px 3px;
  color: #111;
  font-size: 20px;
  border-right: 1px solid #a0a0a0;
}

.sheet-tab--info span {
  display: block;
  height: 27px;
  line-height: 20px;
  background: #70ad47;
}

.add-sheet {
  margin-left: 37px;
}

.add-sheet svg {
  width: 24px;
  height: 24px;
}

.sheet-tabs .dots {
  margin: auto 18px auto auto;
}

.hscroll {
  display: flex;
  flex: 1;
  padding: 3px 29px 0 0;
}

.htrack {
  flex: 1;
  height: 25px;
  background: #dadada;
}

.hthumb {
  width: 94.5%;
  height: 25px;
  background: #fff;
  border: 1px solid #ababab;
}

/* status bar */
.status {
  display: flex;
  align-items: center;
  justify-content: space-between;
  flex: none;
  height: 33px;
  padding: 0 11px 2px;
  background: #f3f3f3;
  border-top: 1px solid #c6c6c6;
}

.status-right {
  display: flex;
  align-items: center;
  color: #a8a8a8;
}

.status-right svg {
  width: 20px;
  height: 20px;
  margin-right: 40px;
}

.zoom-minus {
  width: 10px;
  height: 1px;
  margin: 0 14px 0 -12px;
  background: #a0a0a0;
}

.zoom-line {
  width: 145px;
  height: 1px;
  background: #a0a0a0;
}

.status-right .zoom-plus {
  width: 12px;
  height: 12px;
  margin: 0 19px 0 8px;
}

.zoom-value {
  font-size: 19px;
}

/* taskbar */
.taskbar {
  display: flex;
  flex: none;
  height: 60px;
  background: #060a10;
  color: #fff;
}

.start {
  display: flex;
  align-items: center;
  justify-content: center;
  width: 72px;
}

.start svg {
  width: 24px;
  height: 24px;
}

.search {
  display: flex;
  align-items: center;
  width: 516px;
  padding: 0 22px 1px 13px;
  background: #f2f2f2;
  border-top: 1px solid #bbb;
}

.search > svg {
  width: 34px;
  height: 34px;
}

.search .mic {
  width: 18px;
  height: 26px;
}

.search input {
  flex: 1;
  min-width: 0;
  padding-left: 12px;
  font-size: 22px;
}

.search input::placeholder {
  color: #2b2b2b;
  opacity: 1;
}

.task-view {
  width: 83px;
  padding-left: 23px;
}

.task-view svg {
  width: 26px;
  height: 26px;
}

.task {
  display: flex;
  align-items: center;
  flex: none;
  white-space: nowrap;
  border-bottom: 3px solid #76b9ed;
  padding-top: 2px;
}

.task--folder {
  width: 228px;
  padding-left: 13px;
  gap: 10px;
}

.task--folder svg {
  width: 24px;
  height: 34px;
}

.task--mail {
  width: 89px;
  padding-left: 25px;
  border-bottom-color: transparent;
}

.task--mail svg,
.task--edge svg,
.task--excel svg {
  width: 36px;
  height: 36px;
}

.task--edge {
  width: 228px;
  padding-left: 9px;
  gap: 4px;
}

.task--excel {
  width: 240px;
  margin-left: 8px;
  padding-left: 14px;
  gap: 4px;
  background: #3a3d43;
}

.tray {
  display: flex;
  align-items: center;
  margin-left: auto;
  padding-right: 7px;
}

.tray > svg {
  width: 24px;
  height: 24px;
  margin-right: 12px;
}

.ime {
  width: 22px;
  margin-right: 22px;
  font-size: 21px;
  line-height: 22px;
  text-align: center;
}

.ime--box {
  background: #fff;
  color: #111;
}

.clock {
  display: flex;
  flex-direction: column;
  width: 100px;
  margin-right: 28px;
  font-size: 19px;
  line-height: 27px;
  text-align: center;
}

.tray .brand {
  width: 32px;
  height: 28px;
  margin-right: 38px;
}

.notify {
  position: relative;
  width: 55px;
  border-right: 1px solid #555;
}

.notify svg {
  width: 24px;
  height: 26px;
}

.notify span {
  position: absolute;
  left: 11px;
  top: 9px;
  width: 24px;
  height: 24px;
  line-height: 22px;
  text-align: center;
  font-size: 17px;
  font-weight: 700;
  background: #26282c;
  border: 1px solid #888;
  border-radius: 50%;
}

/* watermark */
.watermark {
  position: absolute;
  right: 116px;
  bottom: 44px;
  color: rgba(255, 255, 255, 0.8);
  pointer-events: none;
  -webkit-text-stroke: 1px #c8c8c8;
}

.wm-top {
  display: flex;
  align-items: flex-end;
  height: 124px;
  line-height: 72px;
}

.wm-bai {
  font: 700 86px/72px 'Liberation Sans', sans-serif;
  -webkit-text-stroke-width: 2px;
}

.wm-paw {
  position: relative;
  margin-left: -4px;
}

.wm-paw svg {
  width: 104px;
  height: 128px;
}

.wm-du {
  position: absolute;
  left: 30px;
  bottom: 6px;
  font: 56px/52px 'Liberation Sans', sans-serif;
}

.wm-jy {
  margin-left: 6px;
  font-size: 66px;
  font-weight: 700;
  -webkit-text-stroke-width: 2px;
}

.wm-url {
  font-size: 45px;
  line-height: 56px;
}
</style>
